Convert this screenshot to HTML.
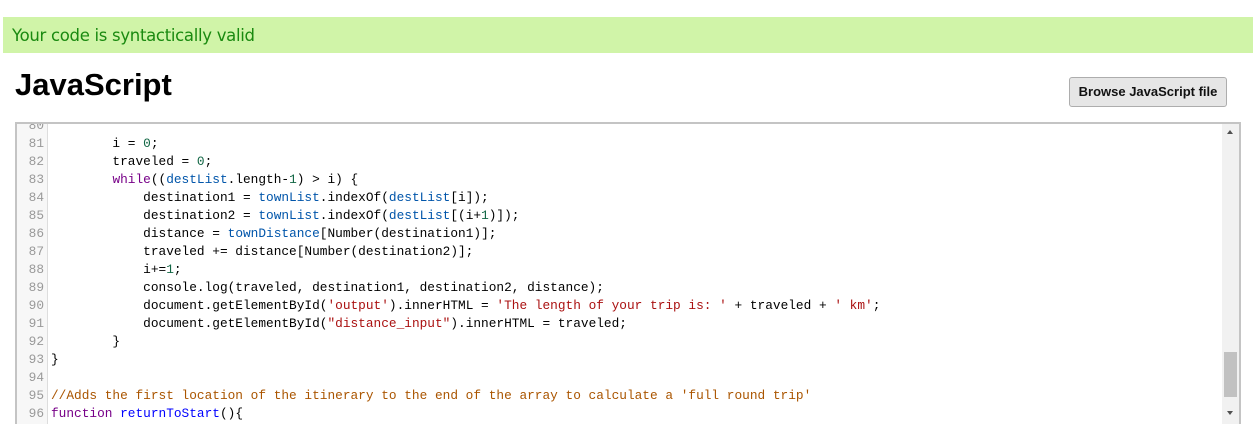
<!DOCTYPE html>
<html><head><style>
html,body{margin:0;width:1257px;height:424px;overflow:hidden;background:#fff;position:relative;}
.ok{position:absolute;left:3px;top:17px;width:1250px;height:36px;background:#d0f4a8;color:#1a8a10;font:16.5px "DejaVu Sans",Verdana,sans-serif;line-height:37px;box-sizing:border-box;padding-left:9px;letter-spacing:-0.3px}
h1{position:absolute;left:15px;top:67px;margin:0;font:bold 31px "Liberation Sans",Arial,sans-serif;color:#000}
.btn{position:absolute;left:1069px;top:77px;width:158px;height:30px;box-sizing:border-box;border:1px solid #adadad;border-radius:3px;background:#e6e6e6;font:bold 13px "Liberation Sans",Arial,sans-serif;line-height:28px;text-align:center;color:#111}
.ed{position:absolute;left:15px;top:122px;width:1226px;height:310px;border:2px solid #c4c4c4;overflow:hidden;box-sizing:border-box}
.gut{position:absolute;left:0;top:0;width:30px;height:100%;background:#f7f7f7;border-right:1px solid #ddd}
.code{position:absolute;left:0;top:-7px;font:12.8px "Liberation Mono","DejaVu Sans Mono",monospace;white-space:pre;line-height:18px;color:#000}
.ln{display:inline-block;width:27px;text-align:right;color:#999;margin-right:7px}
.k{color:#708}.v{color:#05a}.n{color:#164}.s{color:#a11}.c{color:#a50}.d{color:#00f}
.sb{position:absolute;right:0;top:0;width:17px;height:100%;background:#f1f1f1}
.th{position:absolute;right:2px;top:228px;width:13px;height:45px;background:#c1c1c1}
</style></head><body>
<div class="ok">Your code is syntactically valid</div>
<h1>JavaScript</h1>
<div class="btn">Browse JavaScript file</div>
<div class="ed"><div class="gut"></div>
<div class="code"><span class="ln">80</span>
<span class="ln">81</span>        i = <span class="n">0</span>;
<span class="ln">82</span>        traveled = <span class="n">0</span>;
<span class="ln">83</span>        <span class="k">while</span>((<span class="v">destList</span>.length-<span class="n">1</span>) &gt; i) {
<span class="ln">84</span>            destination1 = <span class="v">townList</span>.indexOf(<span class="v">destList</span>[i]);
<span class="ln">85</span>            destination2 = <span class="v">townList</span>.indexOf(<span class="v">destList</span>[(i+<span class="n">1</span>)]);
<span class="ln">86</span>            distance = <span class="v">townDistance</span>[Number(destination1)];
<span class="ln">87</span>            traveled += distance[Number(destination2)];
<span class="ln">88</span>            i+=<span class="n">1</span>;
<span class="ln">89</span>            console.log(traveled, destination1, destination2, distance);
<span class="ln">90</span>            document.getElementById(<span class="s">'output'</span>).innerHTML = <span class="s">'The length of your trip is: '</span> + traveled + <span class="s">' km'</span>;
<span class="ln">91</span>            document.getElementById(<span class="s">"distance_input"</span>).innerHTML = traveled;
<span class="ln">92</span>        }
<span class="ln">93</span>}
<span class="ln">94</span>
<span class="ln">95</span><span class="c">//Adds the first location of the itinerary to the end of the array to calculate a 'full round trip'</span>
<span class="ln">96</span><span class="k">function</span> <span class="d">returnToStart</span>(){
<span class="ln">97</span>
</div>
<div class="sb"><div class="th"></div>
<div style="position:absolute;left:5px;top:6px;width:0;height:0;border-left:3.5px solid transparent;border-right:3.5px solid transparent;border-bottom:4px solid #505050"></div>
<div style="position:absolute;left:5px;top:287px;width:0;height:0;border-left:3.5px solid transparent;border-right:3.5px solid transparent;border-top:4px solid #505050"></div>
</div></div>
</body></html>
